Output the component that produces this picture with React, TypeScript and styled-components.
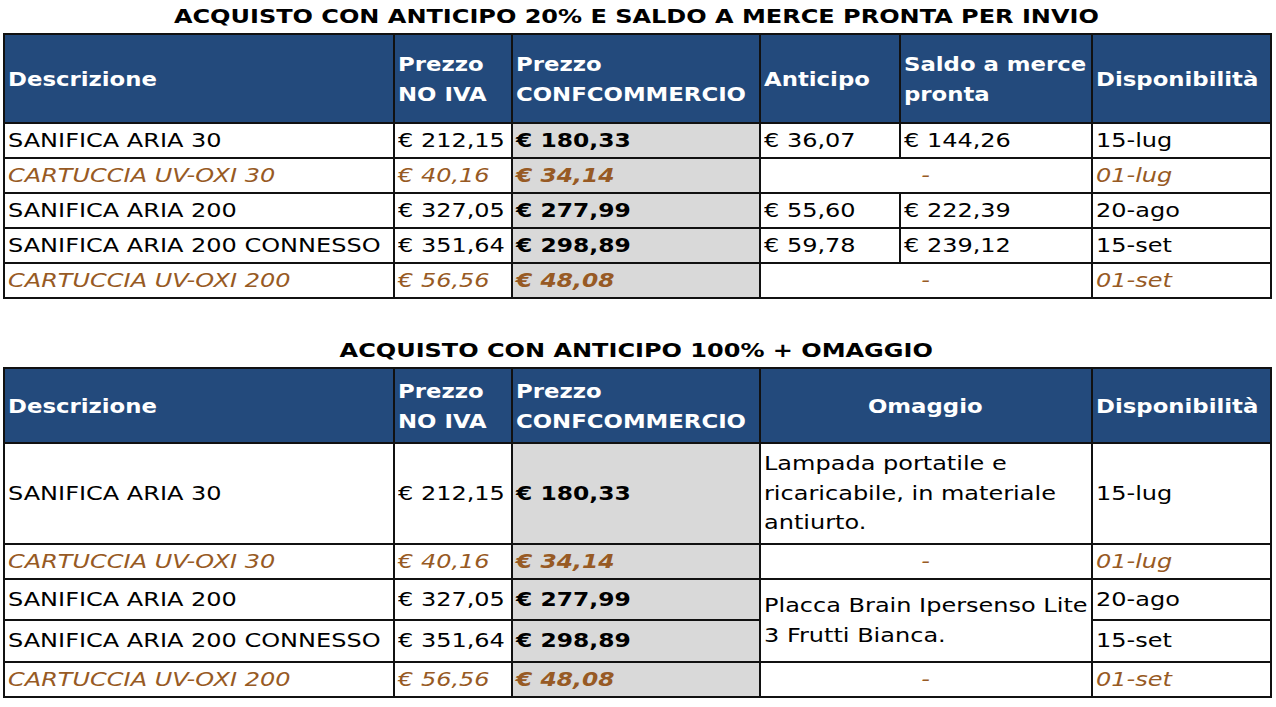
import React, { FC, ReactNode } from "react";
import styled, { createGlobalStyle } from "styled-components";

const GlobalStyle = createGlobalStyle`
  html, body {
    margin: 0;
    padding: 0;
    background: #ffffff;
  }
  body {
    font-family: "DejaVu Sans", Verdana, sans-serif;
  }
`;

const StyledPage = styled.main`
  display: flex;
  flex-direction: column;
  gap: 35px;
  padding: 0 3px;
  width: 1267px;
`;

const StyledSection = styled.section`
  display: flex;
  flex-direction: column;
`;

const StyledTitle = styled.h2`
  margin: 0;
  height: 33px;
  line-height: 33px;
  text-align: center;
  font-size: 20px;
  font-weight: bold;
  color: #000;
`;

const StyledWide = styled.span<{ $center?: boolean; $scale?: number }>`
  display: inline-block;
  transform: scaleX(${({ $scale }) => $scale ?? 1.2});
  transform-origin: ${({ $center }) => ($center ? "center" : "left")} center;
`;

const StyledSheet = styled.table`
  width: 1267px;
  table-layout: fixed;
  border-collapse: collapse;
  font-size: 20px;
`;

const StyledRow = styled.tr<{ $height: number }>`
  height: ${({ $height }) => $height}px;
`;

const StyledHead = styled.th<{ $center?: boolean }>`
  background: #234a7c;
  color: #ffffff;
  border: 2px solid #111;
  padding: 0 3px;
  text-align: ${({ $center }) => ($center ? "center" : "left")};
  vertical-align: middle;
  font-weight: bold;
  line-height: 30px;
  white-space: nowrap;
`;

const StyledCell = styled.td<{ $accessory?: boolean; $shaded?: boolean; $strong?: boolean; $center?: boolean }>`
  border: 2px solid #111;
  padding: 0 3px;
  vertical-align: middle;
  line-height: 29.5px;
  white-space: nowrap;
  text-align: ${({ $center }) => ($center ? "center" : "left")};
  background: ${({ $shaded }) => ($shaded ? "#d9d9d9" : "#ffffff")};
  color: ${({ $accessory }) => ($accessory ? "#975a24" : "#000")};
  font-style: ${({ $accessory }) => ($accessory ? "italic" : "normal")};
  font-weight: ${({ $strong }) => ($strong ? "bold" : "normal")};
`;

interface Product {
  name: string;
  price: string;
  promo: string;
  date: string;
  accessory?: boolean;
}

const products: Product[] = [
  { name: "SANIFICA ARIA 30", price: "€ 212,15", promo: "€ 180,33", date: "15-lug" },
  { name: "CARTUCCIA UV-OXI 30", price: "€ 40,16", promo: "€ 34,14", date: "01-lug", accessory: true },
  { name: "SANIFICA ARIA 200", price: "€ 327,05", promo: "€ 277,99", date: "20-ago" },
  { name: "SANIFICA ARIA 200 CONNESSO", price: "€ 351,64", promo: "€ 298,89", date: "15-set" },
  { name: "CARTUCCIA UV-OXI 200", price: "€ 56,56", promo: "€ 48,08", date: "01-set", accessory: true },
];

const deposits: Record<string, [string, string]> = {
  "SANIFICA ARIA 30": ["€ 36,07", "€ 144,26"],
  "SANIFICA ARIA 200": ["€ 55,60", "€ 222,39"],
  "SANIFICA ARIA 200 CONNESSO": ["€ 59,78", "€ 239,12"],
};

const Head: FC<{ center?: boolean; children: ReactNode }> = ({ center, children }) => (
  <StyledHead $center={center}>
    <StyledWide $center={center} $scale={1.14}>{children}</StyledWide>
  </StyledHead>
);

const Cell: FC<{
  accessory?: boolean;
  shaded?: boolean;
  strong?: boolean;
  center?: boolean;
  colSpan?: number;
  rowSpan?: number;
  children: ReactNode;
}> = ({ accessory, shaded, strong, center, colSpan, rowSpan, children }) => (
  <StyledCell
    $accessory={accessory}
    $shaded={shaded}
    $strong={strong}
    $center={center}
    colSpan={colSpan}
    rowSpan={rowSpan}
  >
    <StyledWide $center={center} $scale={strong ? 1.17 : 1.2}>{children}</StyledWide>
  </StyledCell>
);

const Title: FC<{ children: ReactNode }> = ({ children }) => (
  <StyledTitle>
    <StyledWide $center>{children}</StyledWide>
  </StyledTitle>
);

const Columns: FC<{ widths: number[] }> = ({ widths }) => (
  <colgroup>
    {widths.map((w, i) => (
      <col key={i} width={w} />
    ))}
  </colgroup>
);

const ProductCells: FC<{ p: Product }> = ({ p }) => (
  <>
    <Cell accessory={p.accessory}>{p.name}</Cell>
    <Cell accessory={p.accessory}>{p.price}</Cell>
    <Cell accessory={p.accessory} shaded strong>
      {p.promo}
    </Cell>
  </>
);

const DepositTable: FC = () => (
  <StyledSection>
    <Title>ACQUISTO CON ANTICIPO 20% E SALDO A MERCE PRONTA PER INVIO</Title>
    <StyledSheet>
      <Columns widths={[390, 117.5, 248.5, 140, 191.5, 179.5]} />
      <thead>
        <StyledRow $height={89}>
          <Head>Descrizione</Head>
          <Head>Prezzo<br />NO IVA</Head>
          <Head>Prezzo<br />CONFCOMMERCIO</Head>
          <Head>Anticipo</Head>
          <Head>Saldo a merce<br />pronta</Head>
          <Head>Disponibilità</Head>
        </StyledRow>
      </thead>
      <tbody>
        {products.map((p) => (
          <StyledRow key={p.name} $height={35}>
            <ProductCells p={p} />
            {deposits[p.name] ? (
              <>
                <Cell>{deposits[p.name][0]}</Cell>
                <Cell>{deposits[p.name][1]}</Cell>
              </>
            ) : (
              <Cell colSpan={2} accessory center>-</Cell>
            )}
            <Cell accessory={p.accessory}>{p.date}</Cell>
          </StyledRow>
        ))}
      </tbody>
    </StyledSheet>
  </StyledSection>
);

const giftRows = [101, 35, 41, 42, 35];

const GiftTable: FC = () => (
  <StyledSection>
    <Title>ACQUISTO CON ANTICIPO 100% + OMAGGIO</Title>
    <StyledSheet>
      <Columns widths={[390, 117.5, 248.5, 331.5, 179.5]} />
      <thead>
        <StyledRow $height={75}>
          <Head>Descrizione</Head>
          <Head>Prezzo<br />NO IVA</Head>
          <Head>Prezzo<br />CONFCOMMERCIO</Head>
          <Head center>Omaggio</Head>
          <Head>Disponibilità</Head>
        </StyledRow>
      </thead>
      <tbody>
        {products.map((p, i) => (
          <StyledRow key={p.name} $height={giftRows[i]}>
            <ProductCells p={p} />
            {i === 0 && (
              <Cell>
                Lampada portatile e<br />
                ricaricabile, in materiale<br />
                antiurto.
              </Cell>
            )}
            {i === 2 && (
              <Cell rowSpan={2}>
                Placca Brain Ipersenso Lite<br />
                3 Frutti Bianca.
              </Cell>
            )}
            {p.accessory && <Cell accessory center>-</Cell>}
            <Cell accessory={p.accessory}>{p.date}</Cell>
          </StyledRow>
        ))}
      </tbody>
    </StyledSheet>
  </StyledSection>
);

const App: FC = () => (
  <>
    <GlobalStyle />
    <StyledPage>
      <DepositTable />
      <GiftTable />
    </StyledPage>
  </>
);

export default App;
